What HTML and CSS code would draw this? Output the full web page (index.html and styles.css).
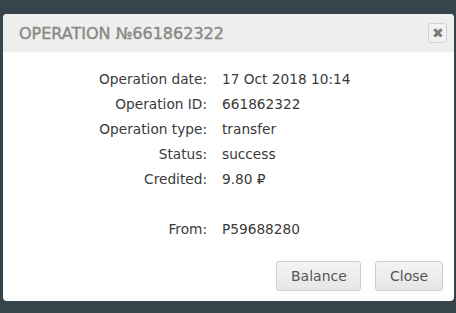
FILE: index.html
```html
<!DOCTYPE html>
<html lang="en">
<head>
  <meta charset="UTF-8">
  <title>Operation</title>
  <link rel="stylesheet" href="styles.css">
</head>
<body>
  <div class="dialog">
    <div class="dialog-header">
      <span class="dialog-title">OPERATION №661862322</span>
      <button class="dialog-close" title="Close">&#x2716;</button>
    </div>
    <div class="dialog-body">
      <div class="details">
        <span class="label">Operation date:</span><span class="value">17 Oct 2018 10:14</span>
        <span class="label">Operation ID:</span><span class="value">661862322</span>
        <span class="label">Operation type:</span><span class="value">transfer</span>
        <span class="label">Status:</span><span class="value">success</span>
        <span class="label">Credited:</span><span class="value">9.80 ₽</span>
        <span class="label"></span><span class="value"></span>
        <span class="label">From:</span><span class="value">P59688280</span>
      </div>
    </div>
    <div class="dialog-buttons">
      <button class="btn">Balance</button>
      <button class="btn">Close</button>
    </div>
  </div>
</body>
</html>
```

FILE: styles.css
```css
html, body {
  height: 100%;
}

body {
  margin: 0;
  background-color: #36444c;
  font-family: "DejaVu Sans", sans-serif;
  padding: 14px 2px 0 3px;
  box-sizing: border-box;
}

.dialog {
  background-color: white;
  border-radius: 4px;
  overflow: hidden;
}

.dialog-header {
  display: flex;
  align-items: center;
  justify-content: space-between;
  height: 38px;
  padding: 0 7px 0 16px;
  background-color: #eeeeee;
}

.dialog-title {
  font-size: 16px;
  color: #8a8885;
  -webkit-text-stroke: 0.4px #8a8885;
}

.dialog-close {
  width: 19px;
  height: 20px;
  padding: 0;
  border: 1px solid #d3d3d3;
  border-radius: 3px;
  background-color: #f2f2f2;
  color: #7a7a7a;
  font-size: 14px;
  line-height: 18px;
}

.dialog-body {
  padding: 15px 0 0;
}

.details {
  display: grid;
  grid-template-columns: 204px auto;
  column-gap: 15px;
  font-size: 13.7px;
  line-height: 25px;
  color: #3a3a3a;
}

.label {
  text-align: right;
  height: 25px;
}

.dialog-buttons {
  display: flex;
  justify-content: flex-end;
  gap: 14px;
  padding: 19px 11px 10px;
}

.btn {
  height: 30px;
  padding: 0 14px;
  border: 1px solid #d0d0d0;
  border-radius: 3px;
  background: linear-gradient(#f4f4f4, #e6e6e6);
  color: #555;
  font-family: "DejaVu Sans", sans-serif;
  font-size: 14px;
}

.btn:first-child {
  width: 85px;
}

.btn:last-child {
  width: 68px;
}
```
